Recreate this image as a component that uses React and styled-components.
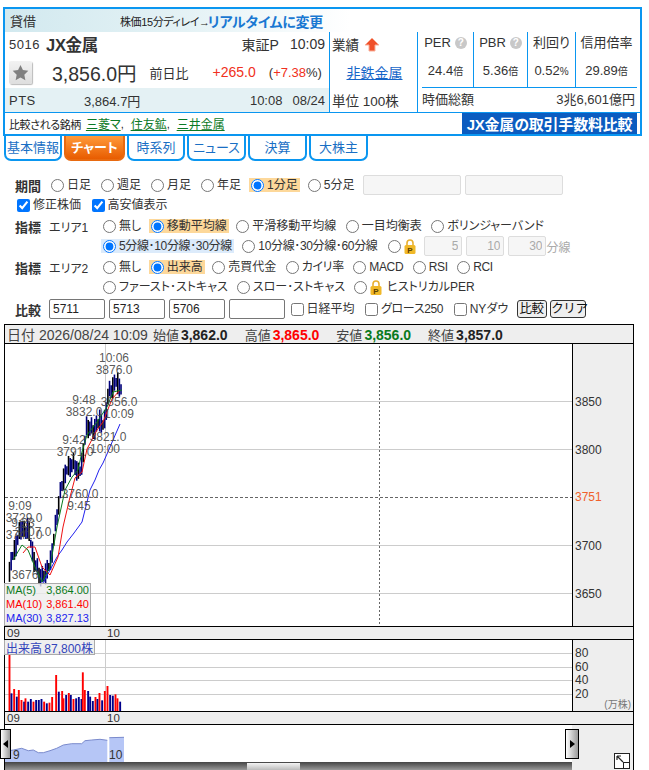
import React from 'react'
import styled, { createGlobalStyle } from 'styled-components'

const BLUE = '#0a96f0'
const FONT = '"Liberation Sans", "Noto Sans CJK JP", sans-serif'

const GlobalStyle = createGlobalStyle`
  html, body {
    margin: 0;
    height: 770px;
    overflow: hidden;
    background: #fff;
    font-family: ${FONT};
    font-size: 12px;
    color: #333;
    font-feature-settings: "palt";
  }
`

const Page = styled.div`
  width: 649px;
  height: 770px;
  overflow: hidden;
  position: relative;
`

/* ---- stock summary ---- */
const Summary = styled.section`
  box-sizing: border-box;
  width: 639px;
  height: 129px;
  margin: 7px 0 0 3px;
  border: 2px solid ${BLUE};
`
const TopBar = styled.div`
  height: 23px;
  display: flex;
  align-items: center;
  background: linear-gradient(90deg, #d2e9ef 0, #e4f2f5 180px, #fff 345px);
`
const Margin = styled.span`
  width: 115px;
  padding-left: 5px;
  box-sizing: border-box;
  font-size: 13px;
`
const Delay = styled.span`
  font-size: 11px;
  letter-spacing: -.4px;
  color: #222;
  margin-right: -2px;
`
const Realtime = styled.a`
  font-size: 14px;
  font-weight: bold;
  letter-spacing: -.3px;
  color: #1a78d2;
`
const InfoGrid = styled.div`
  display: grid;
  grid-template-columns: 324px 89px 222px;
  height: 80px;
  border-bottom: 1px solid ${BLUE};
`
const Quote = styled.div`
  display: grid;
  grid-template-rows: 24px 32px 24px;
`
const QuoteRow = styled.div`
  display: flex;
  align-items: center;
  padding: 0 4px 0 4px;
  font-size: 13px;
  background: ${p => p.$tint ? '#e4f1f4' : 'transparent'};
`
const Code = styled.span`
  width: 37px;
  letter-spacing: .5px;
`
const Name = styled.span`
  font-size: 16.5px;
  font-weight: bold;
  color: #333;
  letter-spacing: -.3px;
`
const Push = styled.span`
  margin-left: ${p => p.$left || 'auto'};
  ${p => p.$color ? `color: ${p.$color};` : ''}
  ${p => p.$size ? `font-size: ${p.$size};` : ''}
`
const StarButton = styled.span`
  width: 23px;
  height: 23px;
  display: flex;
  align-items: center;
  justify-content: center;
  background: linear-gradient(#f2f2f2, #dedede);
  border-radius: 2px;
  box-shadow: 1px 1px 1px #bbb;
`
const Middle = styled.div`
  border-left: 1px solid ${BLUE};
  border-right: 1px solid ${BLUE};
  display: grid;
  grid-template-rows: 24px 32px 24px;
  font-size: 13.5px;
`
const MiddleRow = styled.div`
  display: flex;
  align-items: center;
  padding-left: 2px;
  gap: 5px;
  justify-content: ${p => p.$center ? 'center' : 'flex-start'};
`
const SectorLink = styled.a`
  color: #1565c8;
  text-decoration: underline;
  font-size: 14px;
`
const Stats = styled.div`
  display: grid;
  grid-template-rows: 55px 25px;
`
const StatRow = styled.div`
  display: grid;
  grid-template-columns: 56px 54px 48px 61px;
`
const Stat = styled.div`
  border-right: ${p => p.$last ? 'none' : `1px solid ${BLUE}`};
  display: flex;
  flex-direction: column;
  align-items: center;
  padding-top: 3px;
  gap: 12px;
  font-size: 13px;
  line-height: 16px;
  white-space: nowrap;
`
const Help = styled.span`
  display: inline-block;
  width: 12px;
  height: 12px;
  margin-left: 4px;
  border-radius: 50%;
  background: #c8c8c8;
  color: #fff;
  font-size: 10px;
  line-height: 12px;
  text-align: center;
  font-weight: bold;
  vertical-align: 1px;
`
const Unit = styled.small`
  font-size: 10px;
`
const MarketCap = styled.div`
  margin: 0 3px 0 4px;
  border-top: 1px solid ${BLUE};
  display: flex;
  justify-content: space-between;
  align-items: center;
  font-size: 13px;
  padding: 0 2px 3px 0;
`
const CompareBar = styled.div`
  height: 21px;
  display: flex;
  align-items: center;
  padding-left: 4px;
  font-size: 11px;
  letter-spacing: -.4px;
  color: #222;
`
const Peer = styled.a`
  margin-left: ${p => p.$first ? '5px' : '0'};
  font-size: 12px;
  letter-spacing: 0;
  color: #0b7a26;
  text-decoration: underline;
`
const Comma = styled.span`
  width: 10px;
`
const FeeBanner = styled.a`
  margin: 0 3px 0 auto;
  width: 175px;
  height: 100%;
  background: #0b5cc0;
  color: #fff;
  font-size: 15px;
  font-weight: bold;
  letter-spacing: -.2px;
  display: flex;
  align-items: center;
  justify-content: center;
  white-space: nowrap;
`

/* ---- tabs ---- */
const Tabs = styled.nav`
  display: flex;
  gap: 2px;
  margin-left: 4px;
  height: 25px;
`
const Tab = styled.a`
  box-sizing: border-box;
  width: ${p => p.$w}px;
  padding-bottom: 2px;
  display: flex;
  align-items: center;
  justify-content: center;
  border: 2px solid ${BLUE};
  border-top: none;
  border-radius: 0 0 7px 7px;
  font-size: 13px;
  color: #1a6fc4;
  background: #fff;
  ${p => p.$active && `
    border-color: #e86a10;
    background: linear-gradient(#ff9a3a, #e85c00);
    color: #fff;
    font-weight: bold;
  `}
`

/* ---- form ---- */
const Form = styled.form`
  margin: 14px 0 0 15px;
`
const Row = styled.div`
  --row-gap: ${p => p.$gap || 6.5}px;
  display: flex;
  align-items: center;
  height: 20px;
  gap: var(--row-gap);
  margin-top: ${p => p.$top || 0}px;
  padding-left: ${p => p.$indent || 0}px;
  white-space: nowrap;
`
const RowTitle = styled.b`
  width: 34px;
  font-size: 13px;
  margin-right: calc(var(--row-gap) * -1);
  color: #333;
`
const Area = styled.span`
  width: 52px;
  margin-right: calc(var(--row-gap) * -1);
  font-size: 12px;
`
const Option = styled.label`
  display: inline-flex;
  align-items: center;
  gap: 3px;
  padding: 0 2px;
  height: 14px;
  line-height: 14px;
  letter-spacing: ${p => p.$tight ? '-.35px' : '0'};
  background: ${p => p.$bg || 'transparent'};
  input {
    margin: 0;
    width: 13px;
    height: 13px;
    flex: none;
  }
`
const Field = styled.input`
  box-sizing: border-box;
  width: ${p => p.$w || 56}px;
  height: 20px;
  padding: 0 3px;
  border: 1px solid #767676;
  border-radius: 2px;
  font: 12px ${FONT};
  color: #222;
  text-align: left;
  &:disabled {
    border-color: #ddd;
    background: #f6f6f6;
    color: #aaa;
    text-align: ${p => p.$right ? 'right' : 'left'};
  }
`
const FieldGroup = styled.span`
  display: inline-flex;
  gap: 4px;
  margin-left: ${p => p.$left || 0}px;
  margin-right: ${p => p.$right || 0}px;
`
const Muted = styled.span`
  color: #aaa;
  margin-left: calc(var(--row-gap) * -1);
`
const LockLabel = styled.span`
  margin-left: 2px;
`
const MiniButton = styled.button`
  box-sizing: border-box;
  width: ${p => p.$w}px;
  height: 18px;
  padding: 0;
  border: 1px solid #333;
  border-radius: 3px;
  background: #efefef;
  font: 12.5px ${FONT};
  letter-spacing: -.3px;
  color: #111;
  line-height: 14px;
  margin-left: ${p => p.$left || 0}px;
`

/* ---- chart ---- */
const ChartBox = styled.section`
  box-sizing: border-box;
  width: 630px;
  margin: 5px 0 0 4px;
  border: 1px solid #000;
  border-bottom: none;
`
const OhlcBar = styled.div`
  height: 18px;
  display: flex;
  align-items: center;
  gap: 17px;
  padding-left: 2px;
  background: #eee;
  border-bottom: 1px solid #000;
  font-size: 13px;
  color: #444;
`
const OhlcDate = styled.span`
  font-size: 14px;
  margin-right: -12px;
`
const OhlcValue = styled.b`
  font-size: 14px;
  color: ${p => p.$color || '#222'};
  margin-left: 2px;
`
const Pane = styled.div`
  position: relative;
  display: flex;
  height: ${p => p.$h}px;
  border-bottom: 1px solid #000;
`
const PlotSvg = styled.svg`
  display: block;
  width: 567px;
  height: 100%;
  flex: none;
  background: #fff;
`
const AxisSvg = styled.svg`
  display: block;
  flex: 1;
  height: 100%;
  background: #eee;
  border-left: 1px solid #000;
`
const TimeBar = styled.div`
  position: relative;
  height: 12px;
  background: #eee;
  border-bottom: 1px solid #000;
  display: flex;
  align-items: center;
  font-size: 11.5px;
  line-height: 12px;
  color: #333;
  padding-left: 2px;
`
const HourTick = styled.span`
  margin-left: ${p => p.$left || 0}px;
  width: 14px;
`
const Legend = styled.div`
  position: absolute;
  left: -1px;
  bottom: 0;
  box-sizing: border-box;
  width: 87px;
  height: 43px;
  padding: 0 1px;
  border: 1px solid #aaa;
  background: rgba(236, 236, 236, .78);
  display: grid;
  align-content: space-around;
`
const LegendRow = styled.div`
  display: flex;
  justify-content: space-between;
  font-size: 11px;
  line-height: 13px;
  color: ${p => p.$color};
`
const VolumeTag = styled.div`
  position: absolute;
  left: -1px;
  top: 0;
  box-sizing: border-box;
  width: 91px;
  height: 15px;
  display: flex;
  justify-content: space-between;
  align-items: center;
  padding: 0 1px;
  border: 1px solid #aaa;
  border-top: none;
  background: rgba(236, 236, 236, .85);
  color: #3344bb;
  font-size: 12px;
`
const Navigator = styled.div`
  position: relative;
  display: flex;
  height: 45px;
`
const NavPlot = styled.div`
  width: 567px;
  flex: none;
  display: flex;
  flex-direction: column;
`
const NavSvg = styled.svg`
  display: block;
  width: 567px;
  height: 37px;
`
const Scrollbar = styled.div`
  flex: 1;
  display: flex;
  justify-content: flex-start;
  background: linear-gradient(#444, #999);
`
const Thumb = styled.div`
  width: 53px;
  margin-left: 242px;
  margin-top: 1px;
  background: linear-gradient(#f4f4f4, #bbb);
`
const NavSide = styled.div`
  flex: 1;
  background: #eee;
  display: flex;
  justify-content: flex-end;
  align-items: flex-end;
  padding: 0 3px 1px 0;
`
const Handle = styled.div`
  position: absolute;
  top: 4px;
  ${p => p.$side}: ${p => p.$offset}px;
  box-sizing: border-box;
  width: ${p => p.$w}px;
  height: 30px;
  border: 1px solid #000;
  background: linear-gradient(90deg, #fff, #999);
  display: flex;
  align-items: center;
  justify-content: center;
`

/* ---- drawings ---- */
const Star = () => (
  <svg width="17" height="17" viewBox="0 0 24 24">
    <polygon fill="#808080" points="12,1.5 15.4,8.6 23,9.6 17.4,15 18.9,22.8 12,19 5.1,22.8 6.6,15 1,9.6 8.6,8.6" />
  </svg>
)

const UpArrow = () => (
  <svg width="16" height="15" viewBox="0 0 16 15">
    <path d="M8 1 L15 8 H11 V14 H5 V8 H1 Z" fill="#f0502a" stroke="#f9b09a" strokeWidth="1" />
  </svg>
)

const Lock = () => (
  <svg width="12" height="15" viewBox="0 0 12 15">
    <path d="M3 7 V4 a3 3 0 0 1 6 0 V7" fill="none" stroke="#e8b030" strokeWidth="1.6" />
    <rect x="0.5" y="6" width="11" height="9" rx="1.5" fill="#f0b828" />
    <text x="6" y="14" fontSize="8" fontWeight="bold" textAnchor="middle" fill="#5a4000">P</text>
  </svg>
)

const ResizeIcon = () => (
  <svg width="16" height="16" viewBox="0 0 16 16">
    <rect x="0.5" y="0.5" width="15" height="15" fill="#fff" stroke="#222" />
    <rect x="9.5" y="9.5" width="6" height="6" fill="#fff" stroke="#222" />
    <path d="M3 3 L9 9 M3 3 H7 M3 3 V7" fill="none" stroke="#222" strokeWidth="1.2" />
  </svg>
)

const pricePath = [
  [9, 572], [13, 555], [16, 545], [19, 535], [22, 525], [25, 535], [28, 525], [31, 545],
  [34, 560], [38, 572], [42, 578], [46, 572], [50, 565], [53, 545], [57, 515], [60, 495],
  [63, 480], [66, 472], [70, 465], [75, 465], [79, 475], [82, 462], [85, 440], [87, 425],
  [90, 428], [93, 430], [97, 425], [100, 420], [104, 427], [106, 410], [108, 395], [112, 388],
  [116, 382], [119, 385], [122, 392],
]

const priceAt = x => {
  for (let i = 1; i < pricePath.length; i++) {
    const [x0, y0] = pricePath[i - 1]
    const [x1, y1] = pricePath[i]
    if (x <= x1) return y0 + (y1 - y0) * (x - x0) / (x1 - x0)
  }
  return pricePath[pricePath.length - 1][1]
}

const candles = Array.from({ length: 69 }, (_, i) => {
  const x = 9.5 + i * 1.64
  const mid = priceAt(x)
  return {
    x,
    top: mid - 4 - (Math.sin(i * 2.3) + 1) * 4,
    bottom: mid + 4 + (Math.cos(i * 1.7) + 1) * 4,
    color: i % 3 === 0 ? '#000' : '#00007a',
  }
})

const ma5 = '13,560 22,545 28,550 35,567 42,582 50,567 57,527 65,490 72,477 78,470 82,452 87,435 97,422 107,407 113,392 122,390'
const ma10 = '23,553 28,547 35,547 42,567 50,575 58,557 63,527 70,497 75,478 82,472 87,449 97,430 103,422 112,399 120,390'
const ma30 = '43,583 50,570 57,557 62,550 67,542 74,533 82,522 86,506 90,490 95,480 99,470 103,463 107,454 113,440 120,424'

const priceLabels = [
  ['10:06', 114, 362], ['3876.0', 114, 374], ['3856.0', 119, 406], ['10:09', 119, 418],
  ['9:48', 84, 404], ['3832.0', 84, 416], ['3821.0', 108, 441], ['10:00', 105, 453],
  ['9:42', 74, 444], ['3791.0', 75, 456], ['3760.0', 80, 498], ['9:45', 79, 510],
  ['9:09', 20, 510], ['3729.0', 24, 522], ['9:33', 23, 527], ['3707.0', 33, 536],
  ['3741.0', 24, 539], ['3676', 25, 579],
]

const volumes = [
  [28, 58, 'r'], [34, 175, 'b'], [42, 162, 'r'], [50, 185, 'b'], [56, 165, 'r'], [64, 195, 'r'],
  [72, 200, 'b'], [76, 190, 'r'], [84, 200, 'b'], [92, 192, 'b'], [100, 200, 'r'], [108, 195, 'b'],
  [116, 195, 'b'], [124, 192, 'b'], [132, 200, 'r'], [140, 205, 'b'], [148, 203, 'r'], [156, 186, 'r'],
  [168, 120, 'r'], [176, 170, 'b'], [186, 168, 'r'], [190, 190, 'r'], [198, 180, 'b'], [206, 174, 'r'],
  [212, 180, 'b'], [220, 192, 'r'], [228, 190, 'b'], [236, 186, 'b'], [244, 192, 'b'], [248, 112, 'r'],
  [254, 165, 'r'], [264, 168, 'b'], [270, 185, 'b'], [278, 198, 'b'], [286, 186, 'r'], [292, 192, 'b'],
  [298, 174, 'r'], [306, 196, 'b'], [314, 168, 'r'], [322, 153, 'r'], [330, 180, 'b'], [338, 182, 'b'],
  [346, 178, 'r'], [352, 190, 'r'], [360, 200, 'b'],
]

const navLine = '10,350 40,345 65,340 85,347 100,345 115,353 130,353 150,347 170,340 190,330 215,326 245,326 255,317 275,315 300,313 322,316'
const navLine2 = '328,308 372,307'
const toNav = pts => pts.split(' ').map(p => {
  const [x, y] = p.split(',').map(Number)
  return `${(x / 3).toFixed(1)},${(635 + y / 3).toFixed(1)}`
}).join(' ')

const PricePlot = () => (
  <PlotSvg viewBox="5 344 567 282">
    {[401.5, 449.5, 545.5, 593.5].map(y => (
      <line key={y} x1="5" x2="572" y1={y} y2={y} stroke="#ccc" />
    ))}
    <line x1="105.5" x2="105.5" y1="344" y2="626" stroke="#ccc" />
    <line x1="379.5" x2="379.5" y1="346" y2="626" stroke="#666" strokeDasharray="2 2" />
    <line x1="5" x2="572" y1="497.5" y2="497.5" stroke="#666" strokeDasharray="3 2" />
    {candles.map((c, i) => (
      <line key={i} x1={c.x} x2={c.x} y1={c.top} y2={c.bottom} stroke={c.color} strokeWidth="1.6" />
    ))}
    <polyline points={ma30} fill="none" stroke="#2222ee" />
    <polyline points={ma10} fill="none" stroke="#ee1111" />
    <polyline points={ma5} fill="none" stroke="#0a7a20" />
    {priceLabels.map(([t, x, y]) => (
      <text key={t} x={x} y={y} fontSize="12" textAnchor="middle" fill="#444" fillOpacity=".9">{t}</text>
    ))}
  </PlotSvg>
)

const PriceAxis = () => (
  <AxisSvg viewBox="573 344 60 282">
    {[[3850, 406], [3800, 454], [3700, 550], [3650, 598]].map(([v, y]) => (
      <text key={v} x="575" y={y} fontSize="12" fill="#333">{v}</text>
    ))}
    <text x="575" y="501" fontSize="12" fill="#f0602a">3751</text>
  </AxisSvg>
)

const VolumePlot = () => (
  <PlotSvg viewBox="5 640 567 71">
    {[653.5, 667.5, 680.5, 694.5].map(y => (
      <line key={y} x1="5" x2="572" y1={y} y2={y} stroke="#ccc" />
    ))}
    <line x1="105.5" x2="105.5" y1="640" y2="711" stroke="#ccc" />
    {volumes.map(([x, top, kind]) => (
      <rect
        key={x}
        x={x / 3 - 0.8}
        y={635 + top / 3}
        width="1.9"
        height={(228 - top) / 3}
        fill={kind === 'r' ? '#f00' : '#00008b'}
      />
    ))}
  </PlotSvg>
)

const VolumeAxis = () => (
  <AxisSvg viewBox="573 640 60 71">
    {[[80, 657], [60, 671], [40, 684], [20, 698]].map(([v, y]) => (
      <text key={v} x="575" y={y} fontSize="12" fill="#333">{v}</text>
    ))}
    <text x="631" y="708" fontSize="10" textAnchor="end" fill="#777">(万株)</text>
  </AxisSvg>
)

const NavChart = () => (
  <NavSvg viewBox="5 725 567 37">
    <polygon points={`3,762 ${toNav(navLine)} 107.3,762`} fill="#b6c6f6" />
    <polygon points={`109.3,762 ${toNav(navLine2)} 124,762`} fill="#b6c6f6" />
    <polyline points={toNav(navLine)} fill="none" stroke="#7a8acc" />
    <polyline points={toNav(navLine2)} fill="none" stroke="#7a8acc" />
    <text x="13" y="759" fontSize="12" fill="#333">9</text>
    <text x="109" y="759" fontSize="12" fill="#333">10</text>
  </NavSvg>
)

const Radio = ({ children, on, bg, name, tight }) => (
  <Option $bg={on ? bg : undefined} $tight={tight}>
    <input type="radio" name={name} defaultChecked={!!on} />
    {children}
  </Option>
)

const Check = ({ children, on, tight }) => (
  <Option $tight={tight}>
    <input type="checkbox" defaultChecked={!!on} />
    {children}
  </Option>
)

const ORANGE = '#fdd89a'
const PALE = '#dcebfb'

const App = () => {
  const tabs = [
    ['基本情報', 58], ['チャート', 61], ['時系列', 58], ['ニュース', 59], ['決算', 59], ['大株主', 59],
  ]
  return (
    <Page>
      <GlobalStyle />
      <Summary>
        <TopBar>
          <Margin>貸借</Margin>
          <Delay>株価15分ディレイ→</Delay>
          <Realtime>リアルタイムに変更</Realtime>
        </TopBar>
        <InfoGrid>
          <Quote>
            <QuoteRow>
              <Code>5016</Code>
              <Name>JX金属</Name>
              <Push $size="14px">東証P</Push>
              <Push $left="11px" $size="14px">10:09</Push>
            </QuoteRow>
            <QuoteRow>
              <StarButton><Star /></StarButton>
              <Push $left="20px" $size="19.5px">3,856.0円</Push>
              <Push $left="13px">前日比</Push>
              <Push $left="24px" $color="#f03020" $size="14px">+265.0</Push>
              <Push $left="13px">(<Push $left="0" $color="#f03020">+7.38</Push>%)</Push>
            </QuoteRow>
            <QuoteRow $tint>
              <Code>PTS</Code>
              <Push $left="38px">3,864.7円</Push>
              <Push>10:08</Push>
              <Push $left="10px">08/24</Push>
            </QuoteRow>
          </Quote>
          <Middle>
            <MiddleRow>業績 <UpArrow /></MiddleRow>
            <MiddleRow $center><SectorLink>非鉄金属</SectorLink></MiddleRow>
            <MiddleRow>単位 100株</MiddleRow>
          </Middle>
          <Stats>
            <StatRow>
              <Stat>
                <span>PER<Help>?</Help></span>
                <span>24.4<Unit>倍</Unit></span>
              </Stat>
              <Stat>
                <span>PBR<Help>?</Help></span>
                <span>5.36<Unit>倍</Unit></span>
              </Stat>
              <Stat>
                <span>利回り</span>
                <span>0.52<Unit>%</Unit></span>
              </Stat>
              <Stat $last>
                <span>信用倍率</span>
                <span>29.89<Unit>倍</Unit></span>
              </Stat>
            </StatRow>
            <MarketCap>
              <span>時価総額</span>
              <span>3兆6,601億円</span>
            </MarketCap>
          </Stats>
        </InfoGrid>
        <CompareBar>
          比較される銘柄
          <Peer $first>三菱マ</Peer><Comma>,</Comma>
          <Peer>住友鉱</Peer><Comma>,</Comma>
          <Peer>三井金属</Peer>
          <FeeBanner>JX金属の取引手数料比較</FeeBanner>
        </CompareBar>
      </Summary>

      <Tabs>
        {tabs.map(([label, w]) => (
          <Tab key={label} $w={w} $active={label === 'チャート'}>{label}</Tab>
        ))}
      </Tabs>

      <Form>
        <Row $gap={6}>
          <RowTitle>期間</RowTitle>
          <Radio name="period">日足</Radio>
          <Radio name="period">週足</Radio>
          <Radio name="period">月足</Radio>
          <Radio name="period">年足</Radio>
          <Radio name="period" on bg={ORANGE}>1分足</Radio>
          <Radio name="period">5分足</Radio>
          <FieldGroup $left={1}>
            <Field $w={98} disabled />
            <Field $w={98} disabled />
          </FieldGroup>
        </Row>
        <Row>
          <Check on>修正株価</Check>
          <Check on>高安値表示</Check>
        </Row>
        <Row $top={1} $gap={5.5}>
          <RowTitle>指標</RowTitle>
          <Area>エリア1</Area>
          <Radio name="area1">無し</Radio>
          <Radio name="area1" on bg={ORANGE}>移動平均線</Radio>
          <Radio name="area1">平滑移動平均線</Radio>
          <Radio name="area1">一目均衡表</Radio>
          <Radio name="area1">ボリンジャーバンド</Radio>
        </Row>
        <Row $indent={86}>
          <Radio name="lines" on bg={PALE} tight>5分線･10分線･30分線</Radio>
          <Radio name="lines" tight>10分線･30分線･60分線</Radio>
          <Radio name="lines"><Lock /></Radio>
          <FieldGroup>
            <Field $w={38} $right disabled defaultValue="5" />
            <Field $w={38} $right disabled defaultValue="10" />
            <Field $w={38} $right disabled defaultValue="30" />
          </FieldGroup>
          <Muted>分線</Muted>
        </Row>
        <Row $top={1} $gap={5.5}>
          <RowTitle>指標</RowTitle>
          <Area>エリア2</Area>
          <Radio name="area2">無し</Radio>
          <Radio name="area2" on bg={ORANGE}>出来高</Radio>
          <Radio name="area2">売買代金</Radio>
          <Radio name="area2" tight>カイリ率</Radio>
          <Radio name="area2" tight>MACD</Radio>
          <Radio name="area2" tight>RSI</Radio>
          <Radio name="area2" tight>RCI</Radio>
        </Row>
        <Row $indent={86} $gap={5}>
          <Radio name="area2">ファースト･ストキャス</Radio>
          <Radio name="area2">スロー･ストキャス</Radio>
          <Radio name="area2"><Lock /><LockLabel>ヒストリカルPER</LockLabel></Radio>
        </Row>
        <Row $top={2}>
          <RowTitle>比較</RowTitle>
          <FieldGroup $right={-3}>
            <Field defaultValue="5711" />
            <Field defaultValue="5713" />
            <Field defaultValue="5706" />
            <Field />
          </FieldGroup>
          <Check>日経平均</Check>
          <Check tight>グロース250</Check>
          <Check>NYダウ</Check>
          <MiniButton type="button" $w={30}>比較</MiniButton>
          <MiniButton type="button" $w={36} $left={-3}>クリア</MiniButton>
        </Row>
      </Form>

      <ChartBox>
        <OhlcBar>
          <OhlcDate>日付 2026/08/24 10:09</OhlcDate>
          <span>始値<OhlcValue>3,862.0</OhlcValue></span>
          <span>高値<OhlcValue $color="#f00">3,865.0</OhlcValue></span>
          <span>安値<OhlcValue $color="#0a7a20">3,856.0</OhlcValue></span>
          <span>終値<OhlcValue>3,857.0</OhlcValue></span>
        </OhlcBar>
        <Pane $h={282}>
          <PricePlot />
          <PriceAxis />
          <Legend>
            <LegendRow $color="#0a7a20"><span>MA(5)</span><span>3,864.00</span></LegendRow>
            <LegendRow $color="#f00"><span>MA(10)</span><span>3,861.40</span></LegendRow>
            <LegendRow $color="#2222ee"><span>MA(30)</span><span>3,827.13</span></LegendRow>
          </Legend>
        </Pane>
        <TimeBar><HourTick>09</HourTick><HourTick $left={86}>10</HourTick></TimeBar>
        <Pane $h={71}>
          <VolumePlot />
          <VolumeAxis />
          <VolumeTag><span>出来高</span><span>87,800株</span></VolumeTag>
        </Pane>
        <TimeBar><HourTick>09</HourTick><HourTick $left={86}>10</HourTick></TimeBar>
        <Navigator>
          <NavPlot>
            <NavChart />
            <Scrollbar><Thumb /></Scrollbar>
          </NavPlot>
          <NavSide><ResizeIcon /></NavSide>
          <Handle $side="left" $offset={-5} $w={11}>
            <svg width="5" height="8" viewBox="0 0 5 8"><path d="M5 0 V8 L0 4 Z" fill="#000" /></svg>
          </Handle>
          <Handle $side="left" $offset={560} $w={14}>
            <svg width="5" height="8" viewBox="0 0 5 8"><path d="M0 0 V8 L5 4 Z" fill="#000" /></svg>
          </Handle>
        </Navigator>
      </ChartBox>
    </Page>
  )
}

export default App
